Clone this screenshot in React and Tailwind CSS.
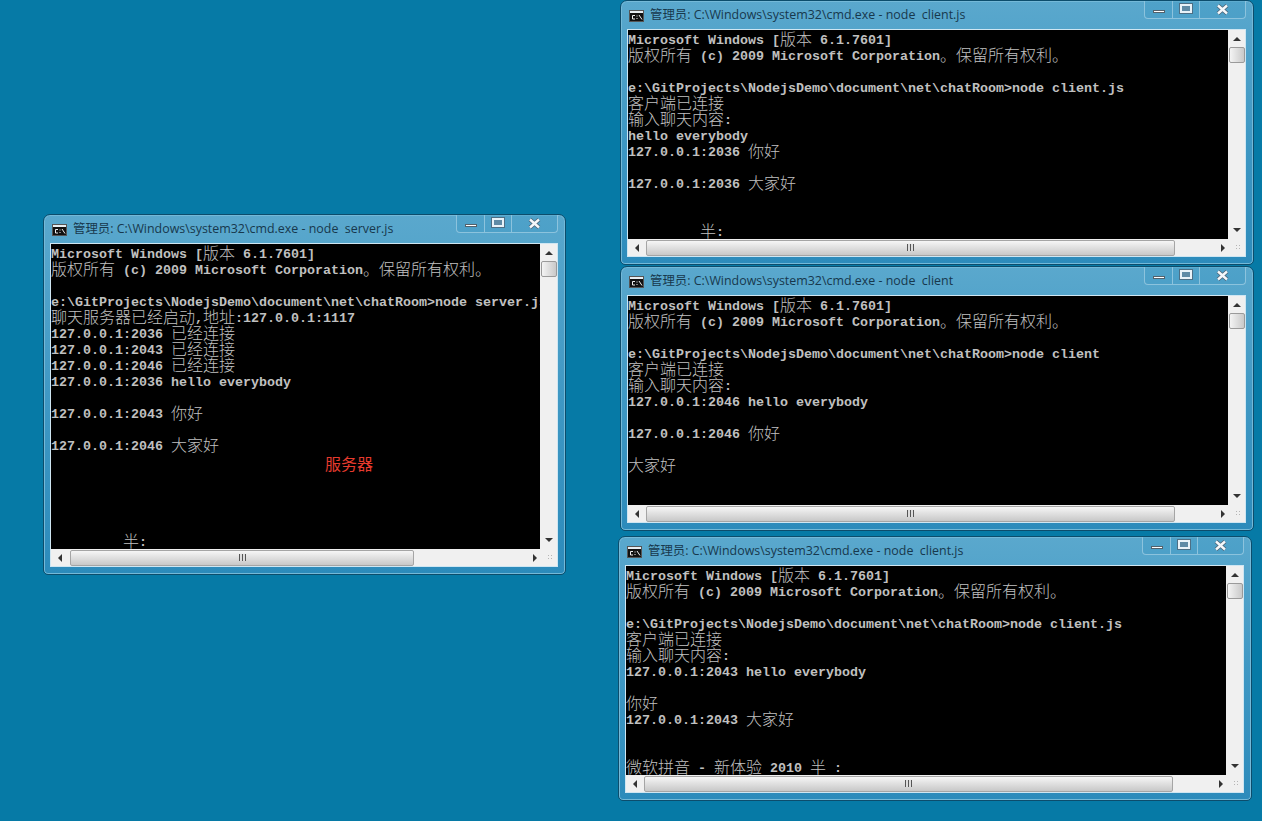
import React from "react";

const CJK_RUN = /([\u3000-\u303f\u4e00-\u9fff\uff00-\uffef]+)/;

const ConsoleLine = ({ text }) => {
    if (!text) return <div className="h-4" />;
    return (
        <div className="h-4 whitespace-pre font-['Noto_Sans_CJK_SC',sans-serif] text-[16px] font-light leading-4">
            {text.split(CJK_RUN).map((part, i) =>
                CJK_RUN.test(part) ? (
                    <span key={i}>{part}</span>
                ) : (
                    <span key={i} className="align-[1px] font-['Liberation_Mono',monospace] text-[13.33px] font-bold leading-3">
                        {part}
                    </span>
                )
            )}
        </div>
    );
};

const CmdIcon = () => (
    <svg width="15" height="12" viewBox="0 0 15 12" className="shrink-0">
        <rect x="0.5" y="0.5" width="14" height="11" fill="#111" stroke="#555" />
        <rect x="1" y="1" width="13" height="2" fill="#e8eef2" />
        <path d="M6 5.5H3.5V9H6M8 5.5v1M8 8v1M10 5l3 4.5" fill="none" stroke="#eee" strokeWidth="1" />
    </svg>
);

const CaptionButtons = () => (
    <div className="mr-[-1px] flex h-[18px] w-[102px] shrink-0 self-start rounded-b-[4px] border border-t-0 border-[#8cc3dd] bg-[#3f98c4]/40">
        <div className="flex w-[28px] items-end justify-center border-r border-[#8cc3dd] pb-[5px]">
            <div className="h-[3px] w-[12px] border border-[#53616b] bg-white" />
        </div>
        <div className="flex w-[27px] items-start justify-center border-r border-[#8cc3dd] pt-[3px]">
            <div className="h-[9px] w-[12px] border-2 border-[#e8f2f8] bg-[#5f8ba6] outline outline-1 outline-[#4d6f85]" />
        </div>
        <div className="flex flex-1 items-center justify-center">
            <svg width="13" height="11" viewBox="0 0 13 11">
                <path d="M2 1.5L11 9.5M11 1.5L2 9.5" stroke="#4d6274" strokeWidth="4" />
                <path d="M2 1.5L11 9.5M11 1.5L2 9.5" stroke="#f4f8fb" strokeWidth="2.4" />
            </svg>
        </div>
    </div>
);

const VerticalScrollbar = () => (
    <div className="flex w-[17px] shrink-0 flex-col items-center bg-[#f0f0f0]">
        <div className="mt-[7px] h-0 w-0 border-x-[4px] border-b-[4px] border-x-transparent border-b-[#333]" />
        <div className="mt-[6px] h-[16px] w-[16px] rounded-[2px] border border-[#9a9a9a] bg-gradient-to-r from-[#f4f4f4] to-[#c9c9c9]" />
        <div className="mt-auto mb-[7px] h-0 w-0 border-x-[4px] border-t-[4px] border-x-transparent border-t-[#333]" />
    </div>
);

const HorizontalScrollbar = ({ thumb }) => (
    <div className="flex h-[17px] shrink-0 items-center bg-[#f0f0f0]">
        <div className="flex w-[18px] shrink-0 justify-center">
            <div className="h-0 w-0 border-y-[4px] border-r-[4px] border-y-transparent border-r-[#333]" />
        </div>
        <div className={`flex h-[16px] items-center justify-center rounded-[2px] border border-[#a5a5a5] bg-gradient-to-b from-[#f6f6f6] to-[#c8c8c8] ${thumb}`}>
            <div className="h-[7px] w-[7px] bg-[repeating-linear-gradient(90deg,#555_0,#555_1px,#ddd_1px,#ddd_3px)]" />
        </div>
        <div className="ml-auto flex w-[33px] shrink-0 items-center justify-between pl-[9px] pr-[3px]">
            <div className="h-0 w-0 border-y-[4px] border-l-[4px] border-y-transparent border-l-[#333]" />
            <div className="h-[7px] w-[7px] bg-[radial-gradient(#b5b5b5_1px,transparent_1px)] bg-[length:3px_3px]" />
        </div>
    </div>
);

const CmdWindow = ({ title, place, thumb, lines, children }) => (
    <div className={`absolute flex flex-col rounded-t-[7px] rounded-b-[5px] border border-[#0c4d6c] bg-gradient-to-b from-[#5aa8cd] via-[#3f98c4] to-[#2c8bbb] pl-[7px] pr-2 shadow-[inset_0_0_0_1px_#74b9d8] ${place}`}>
        <div className="flex h-[29px] shrink-0 items-center gap-[6px] pl-[1px]">
            <CmdIcon />
            <span className="min-w-0 flex-1 truncate whitespace-pre pb-[1px] font-['Open_Sans','Noto_Sans_CJK_SC',sans-serif] text-[12.43px] text-[#17384c]">
                {title}
            </span>
            <CaptionButtons />
        </div>
        <div className="flex min-h-0 flex-1 flex-col outline outline-1 outline-[#cfe6f2]">
            <div className="flex min-h-0 flex-1">
                <div className="relative min-w-0 flex-1 overflow-hidden bg-black text-[#c0c0c0]">
                    {lines.map((line, i) => (
                        <ConsoleLine key={i} text={line} />
                    ))}
                    {children}
                </div>
                <VerticalScrollbar />
            </div>
            <HorizontalScrollbar thumb={thumb} />
        </div>
        <div className="h-2 shrink-0" />
    </div>
);

const SERVER_LINES = [
    "Microsoft Windows [版本 6.1.7601]",
    "版权所有 (c) 2009 Microsoft Corporation。保留所有权利。",
    "",
    "e:\\GitProjects\\NodejsDemo\\document\\net\\chatRoom>node server.js",
    "聊天服务器已经启动,地址:127.0.0.1:1117",
    "127.0.0.1:2036 已经连接",
    "127.0.0.1:2043 已经连接",
    "127.0.0.1:2046 已经连接",
    "127.0.0.1:2036 hello everybody",
    "",
    "127.0.0.1:2043 你好",
    "",
    "127.0.0.1:2046 大家好",
    "",
    "",
    "",
    "",
    "",
    "         半:",
];

const CLIENT_ONE_LINES = [
    "Microsoft Windows [版本 6.1.7601]",
    "版权所有 (c) 2009 Microsoft Corporation。保留所有权利。",
    "",
    "e:\\GitProjects\\NodejsDemo\\document\\net\\chatRoom>node client.js",
    "客户端已连接",
    "输入聊天内容:",
    "hello everybody",
    "127.0.0.1:2036 你好",
    "",
    "127.0.0.1:2036 大家好",
    "",
    "",
    "         半:",
];

const CLIENT_TWO_LINES = [
    "Microsoft Windows [版本 6.1.7601]",
    "版权所有 (c) 2009 Microsoft Corporation。保留所有权利。",
    "",
    "e:\\GitProjects\\NodejsDemo\\document\\net\\chatRoom>node client",
    "客户端已连接",
    "输入聊天内容:",
    "127.0.0.1:2046 hello everybody",
    "",
    "127.0.0.1:2046 你好",
    "",
    "大家好",
];

const CLIENT_THREE_LINES = [
    "Microsoft Windows [版本 6.1.7601]",
    "版权所有 (c) 2009 Microsoft Corporation。保留所有权利。",
    "",
    "e:\\GitProjects\\NodejsDemo\\document\\net\\chatRoom>node client.js",
    "客户端已连接",
    "输入聊天内容:",
    "127.0.0.1:2043 hello everybody",
    "",
    "你好",
    "127.0.0.1:2043 大家好",
    "",
    "",
    "微软拼音 - 新体验 2010 半 :",
];

export default function App() {
    return (
        <div className="relative h-[821px] w-full overflow-hidden bg-[#067aa6]">
            <CmdWindow
                title="管理员: C:\Windows\system32\cmd.exe - node  server.js"
                place="left-[43px] top-[214px] h-[361px] w-[523px]"
                thumb="ml-px w-[344px]"
                lines={SERVER_LINES}
            >
                <span className="absolute left-[274px] top-[209px] font-['Noto_Sans_CJK_SC',sans-serif] text-[16px] leading-5 text-[#e63b2e]">
                    服务器
                </span>
            </CmdWindow>
            <CmdWindow
                title="管理员: C:\Windows\system32\cmd.exe - node  client.js"
                place="left-[620px] top-0 h-[265px] w-[634px]"
                thumb="w-[529px]"
                lines={CLIENT_ONE_LINES}
            />
            <CmdWindow
                title="管理员: C:\Windows\system32\cmd.exe - node  client"
                place="left-[620px] top-[266px] h-[265px] w-[634px]"
                thumb="w-[529px]"
                lines={CLIENT_TWO_LINES}
            />
            <CmdWindow
                title="管理员: C:\Windows\system32\cmd.exe - node  client.js"
                place="left-[618px] top-[536px] h-[265px] w-[634px]"
                thumb="w-[529px]"
                lines={CLIENT_THREE_LINES}
            />
        </div>
    );
}
